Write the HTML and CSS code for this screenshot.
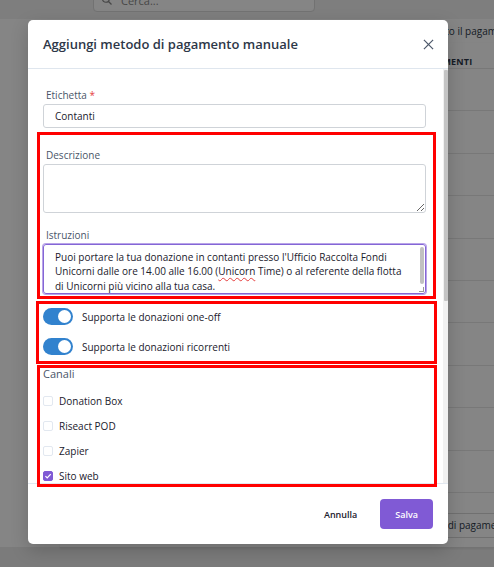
FILE: index.html
```html
<!DOCTYPE html>
<html lang="it">
<head>
<meta charset="utf-8">
<title>Aggiungi metodo di pagamento manuale</title>
<link rel="stylesheet" href="styles.css">
</head>
<body>
<div class="page">
  <header class="topbar">
    <div class="search">
      <svg class="search-icon" viewBox="0 0 16 16" width="12" height="12"><circle cx="6.5" cy="6.5" r="4.5"/><line x1="10" y1="10" x2="14" y2="14"/></svg>
      <span>Cerca...</span>
    </div>
  </header>
  <main class="main">
    <p class="intro">Seleziona il metodo con cui è stato effettuato il pagamento manuale</p>
    <div class="table">
      <div class="thead"><span class="th">PAGAMENTI</span></div>
      <div class="row"></div>
      <div class="row"></div>
      <div class="row"></div>
      <div class="row"></div>
      <div class="row"></div>
      <div class="row"></div>
      <div class="row"></div>
      <div class="row"></div>
      <div class="row"></div>
      <div class="row"></div>
      <div class="table-footer"><span class="outline-btn">Aggiungi metodo di pagamento</span></div>
    </div>
  </main>
</div>

<div class="backdrop"></div>

<section class="modal" role="dialog" aria-labelledby="modal-title">
  <header class="modal-header">
    <h2 id="modal-title" class="modal-title">Aggiungi metodo di pagamento manuale</h2>
    <button class="close" aria-label="Chiudi">
      <svg viewBox="0 0 12 12" width="11" height="11"><line x1="1" y1="1" x2="11" y2="11"/><line x1="11" y1="1" x2="1" y2="11"/></svg>
    </button>
  </header>
  <div class="modal-body-wrap">
    <div class="modal-body">
      <div class="field field-first">
        <label class="label">Etichetta <span class="req">*</span></label>
        <div class="input">Contanti</div>
      </div>
      <div class="field field-second">
        <label class="label">Descrizione</label>
        <textarea class="textarea textarea-desc"></textarea>
      </div>
      <div class="field">
        <label class="label">Istruzioni</label>
        <div class="textarea textarea-focus">Puoi portare la tua donazione in contanti presso l'Ufficio Raccolta Fondi Unicorni dalle ore 14.00 alle 16.00 (<span class="typo">Unicorn</span> Time) o al referente della flotta di Unicorni più vicino alla tua casa.<span class="ta-thumb"></span></div>
      </div>
      <div class="switches">
        <div class="switch-row"><span class="switch"><span class="knob"></span></span><span>Supporta le donazioni one-off</span></div>
        <div class="switch-row"><span class="switch"><span class="knob"></span></span><span>Supporta le donazioni ricorrenti</span></div>
      </div>
      <div class="channels">
        <div class="channels-title">Canali</div>
        <div class="check-list">
          <div class="check-row"><span class="check"></span><span>Donation Box</span></div>
          <div class="check-row"><span class="check"></span><span>Riseact POD</span></div>
          <div class="check-row"><span class="check"></span><span>Zapier</span></div>
          <div class="check-row"><span class="check is-checked"><svg viewBox="0 0 10 10" width="8" height="8"><polyline points="1.8,5.2 4,7.4 8.4,2.6"/></svg></span><span>Sito web</span></div>
        </div>
      </div>
    </div>
    <div class="scrollbar"><div class="scrollbar-thumb"></div></div>
  </div>
  <footer class="modal-footer">
    <button class="btn btn-ghost">Annulla</button>
    <button class="btn btn-primary">Salva</button>
  </footer>
</section>

<div class="mark mark-1"></div>
<div class="mark mark-2"></div>
<div class="mark mark-3"></div>
</body>
</html>
```

FILE: styles.css
```css
* { box-sizing: border-box; }

html, body { margin: 0; padding: 0; }

body {
  width: 494px;
  height: 567px;
  overflow: hidden;
  position: relative;
  background: #ececec;
  font-family: "Open Sans", "Noto Sans", sans-serif;
  color: #1a202c;
}

/* ---------- background page ---------- */
.topbar {
  height: 19px;
  background: #f1f1f1;
  display: flex;
  align-items: flex-end;
  padding: 0 0 7px 93px;
}

.search {
  width: 222px;
  height: 24px;
  flex: none;
  background: #fff;
  border: 1px solid #dadada;
  border-radius: 4px;
  display: flex;
  align-items: center;
  gap: 8px;
  padding: 0 7px;
  font-size: 11px;
  color: #8a8a8a;
}

.search-icon { fill: none; stroke: #888; stroke-width: 1.6; }

.main {
  background: #fff;
  height: 528px;
  padding-left: 60px;
}

.intro {
  margin: 0;
  height: 24px;
  line-height: 24px;
  font-size: 10px;
  color: #2d3748;
  white-space: nowrap;
  padding-left: 185px;
}

.table {
  border-bottom: 1px solid #dcdcdc;
  box-shadow: 0 1px 2px rgba(0,0,0,0.08);
}

.thead {
  height: 26px;
  display: flex;
  align-items: flex-end;
  padding: 0 0 0 357px;
  border-bottom: 1px solid #e6e6e6;
}

.th {
  font-size: 9px;
  line-height: 12px;
  font-weight: 700;
  color: #2d3748;
  letter-spacing: 0.2px;
}

.row {
  height: 42.4px;
  border-bottom: 1px solid #e6e6e6;
}

.table-footer {
  height: 54px;
  padding: 20px 0 0 297px;
  display: flex;
  align-items: flex-start;
}

.outline-btn {
  height: 25px;
  line-height: 23px;
  padding: 0 8px;
  border: 1px solid #d6d6d6;
  border-radius: 4px;
  font-size: 10px;
  color: #2d3748;
  white-space: nowrap;
}

.backdrop {
  position: absolute;
  inset: 0;
  background: rgba(0, 0, 0, 0.48);
}

/* ---------- modal ---------- */
.modal {
  position: absolute;
  left: 28px;
  top: 20px;
  width: 420px;
  height: 524px;
  background: #fff;
  border-radius: 5px;
  box-shadow: 0 6px 18px rgba(0,0,0,0.18);
  display: flex;
  flex-direction: column;
  overflow: hidden;
}

.modal-header {
  height: 49px;
  flex: none;
  border-bottom: 1px solid #dfe6ee;
  display: flex;
  align-items: center;
  justify-content: space-between;
  padding: 0 14px 0 15px;
}

.modal-title {
  margin: 0;
  font-size: 13px;
  font-weight: 600;
  color: #2d3748;
  padding-bottom: 1px;
}

.close {
  border: 0;
  background: none;
  padding: 0;
  width: 11px;
  height: 11px;
  display: flex;
}

.close svg { stroke: #4a5568; stroke-width: 1.3; fill: none; }

.modal-body-wrap {
  position: relative;
  height: 414px;
  flex: none;
  overflow: hidden;
}

.modal-body {
  padding: 18px 22px 0 15px;
}

.field { display: flex; flex-direction: column; gap: 1px; margin-bottom: 14px; }
.field-first { margin-bottom: 19px; }

.label {
  font-size: 10px;
  line-height: 16px;
  color: #4a5568;
  padding-left: 3px;
}

.req { color: #e53e3e; }

.input {
  height: 24px;
  border: 1px solid #cfd3d8;
  border-radius: 3px;
  padding: 0 11px;
  font-size: 10px;
  line-height: 22px;
  color: #1a202c;
}

.textarea {
  display: block;
  width: 100%;
  margin: 0;
  border: 1px solid #cfd3d8;
  border-radius: 3px;
  font-family: inherit;
  font-size: 10px;
  line-height: 14.4px;
  color: #1a202c;
  padding: 5px 11px;
}

.textarea-desc { height: 49px; resize: vertical; }

.textarea-focus {
  position: relative;
  height: 50px;
  border-color: #8466d6;
  box-shadow: 0 0 0 1px rgba(128, 90, 213, 0.55);
  overflow: hidden;
  padding: 5px 14px 0 11px;
}

/* scrollbar thumb + resize grip of the focused textarea */
.ta-thumb {
  position: absolute;
  top: 2px;
  right: 1px;
  width: 4px;
  height: 37px;
  border-radius: 2px;
  background: #c1c1c1;
}

.textarea-focus::after {
  content: "";
  position: absolute;
  right: 1px;
  bottom: 1px;
  width: 4px;
  height: 4px;
  border-right: 1px solid #9a9a9a;
  border-bottom: 1px solid #9a9a9a;
}

.typo {
  text-decoration: underline wavy #e53e3e;
  text-decoration-thickness: 1px;
  text-underline-offset: 2px;
}

.switches {
  margin-top: 10px;
  display: flex;
  flex-direction: column;
  gap: 13px;
}

.switch-row {
  display: flex;
  align-items: center;
  gap: 9px;
  font-size: 10px;
  color: #1a202c;
  height: 17px;
}

.switch {
  width: 30px;
  height: 17px;
  border-radius: 9px;
  background: #3182ce;
  display: flex;
  align-items: center;
  justify-content: flex-end;
  padding: 0 2px;
  flex: none;
}

.knob {
  width: 13px;
  height: 13px;
  border-radius: 50%;
  background: #fff;
}

.channels { margin-top: 11px; }

.channels-title {
  font-size: 11px;
  line-height: 16px;
  color: #4a5568;
}

.check-list {
  margin-top: 11px;
  display: flex;
  flex-direction: column;
  gap: 9px;
}

.check-row {
  height: 16px;
  display: flex;
  align-items: center;
  gap: 6px;
  font-size: 10px;
  color: #1a202c;
}

.check {
  width: 10px;
  height: 10px;
  border: 1.5px solid #e2e8f0;
  border-radius: 2px;
  flex: none;
  display: flex;
  align-items: center;
  justify-content: center;
}

.check.is-checked {
  background: #805ad5;
  border-color: #805ad5;
}

.check svg { fill: none; stroke: #fff; stroke-width: 1.6; }

.scrollbar {
  position: absolute;
  top: 0;
  right: 0;
  bottom: 0;
  width: 5px;
  background: #f1f1f1;
}

.scrollbar-thumb {
  margin: 1px 0 0 0.5px;
  width: 4px;
  height: 231px;
  background: #c4c4c4;
  border-radius: 1px;
}

.modal-footer {
  flex: 1;
  border-top: 1px solid #e2e8f0;
  display: flex;
  justify-content: flex-end;
  align-items: flex-start;
  gap: 8px;
  padding: 15px 15px 0 0;
}

.btn {
  height: 30px;
  padding: 0 15px;
  border: 0;
  border-radius: 4px;
  font-family: inherit;
  font-size: 9px;
  font-weight: 600;
}

.btn-ghost { background: transparent; color: #1a202c; }
.btn-primary { background: #805ad5; color: #fff; }

/* ---------- red annotation boxes ---------- */
.mark {
  position: absolute;
  border: 3px solid #ff0000;
  pointer-events: none;
}

.mark-1 { left: 37px; top: 132px; width: 399px; height: 167px; }
.mark-2 { left: 36px; top: 301px; width: 401px; height: 63px; }
.mark-3 { left: 37px; top: 365px; width: 400px; height: 122px; }
```
